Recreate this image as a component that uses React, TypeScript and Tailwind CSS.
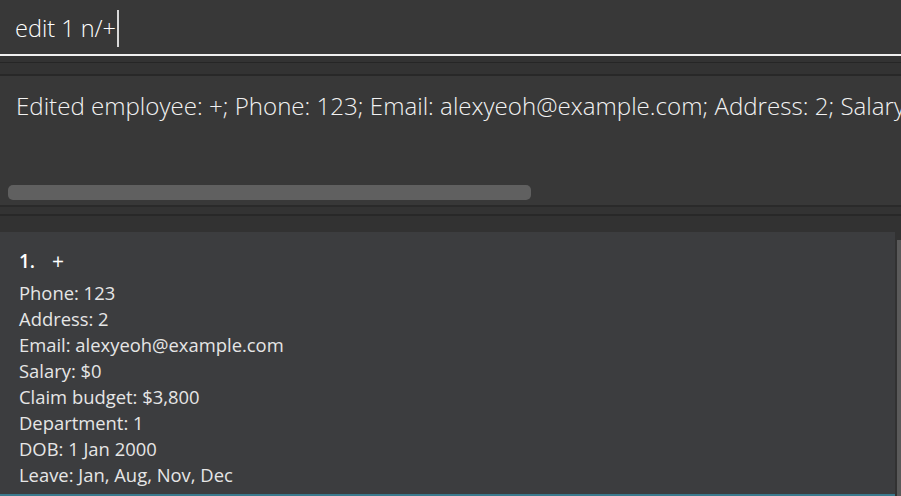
const lines = [
  "Phone: 123",
  "Address: 2",
  "Email: alexyeoh@example.com",
  "Salary: $0",
  "Claim budget: $3,800",
  "Department: 1",
  "DOB: 1 Jan 2000",
  "Leave: Jan, Aug, Nov, Dec",
];

const font = { fontFamily: '"Open Sans", "Noto Sans", sans-serif' };

export default function App() {
  return (
    <div className="w-[901px] h-[496px] bg-[#2f2f2f] overflow-hidden flex flex-col" style={font}>
      {/* command box */}
      <div className="h-[54px] bg-[#383838] flex items-center pl-[15px] pt-[3px]">
        <span className="text-[23.5px] font-light text-white">edit 1 n/+</span>
        <span className="w-[2px] h-[37px] bg-[#d8d8d8] ml-[1px]" />
      </div>
      <div className="h-[2px] bg-[#f0f0f0]" />

      {/* divider */}
      <div className="h-[20px] flex flex-col">
        <div className="h-[6px] bg-[#333333]" />
        <div className="h-[1px] bg-[#262626]" />
        <div className="h-[11px] bg-[#333333]" />
        <div className="h-[2px] bg-[#282828]" />
      </div>

      {/* result display */}
      <div className="h-[129px] bg-[#383838] flex flex-col overflow-hidden">
        <div className="pl-[16px] pt-[12px] h-[109px] whitespace-nowrap text-[24.1px] font-light text-[#f2f2f2]">
          Edited employee: +; Phone: 123; Email: alexyeoh@example.com; Address: 2; Salary: $0
        </div>
        <div className="pl-[8px]">
          <div className="w-[523px] h-[15px] rounded-[5px] bg-[#606060]" />
        </div>
      </div>

      {/* divider */}
      <div className="h-[27px] flex flex-col">
        <div className="h-[2px] bg-[#2a2a2a]" />
        <div className="h-[7px] bg-[#333333]" />
        <div className="h-[2px] bg-[#282828]" />
        <div className="flex-1 bg-[#323232]" />
      </div>

      {/* list */}
      <div className="flex-1 flex bg-[#323232]">
        <div className="w-[895px] bg-[#3c3d3f] flex flex-col pl-[19px] pt-[16px] text-[#e6e6e6]">
          <div className="flex items-center text-[19px] font-semibold text-white leading-[26px] h-[32px] pb-[6px]">
            <span>1.</span>
            <span className="ml-[17px] text-[21px] font-normal">+</span>
          </div>
          {lines.map((l) => (
            <div key={l} className="text-[18.4px] leading-[26px]">
              {l}
            </div>
          ))}
          <div className="flex-1" />
          <div className="h-[2px] bg-[#3a7a8e] -ml-[19px]" />
        </div>
        <div className="w-[2px]" />
        <div className="mt-[8px] w-[4px] bg-[#5a5a5a]" />
      </div>
    </div>
  );
}
